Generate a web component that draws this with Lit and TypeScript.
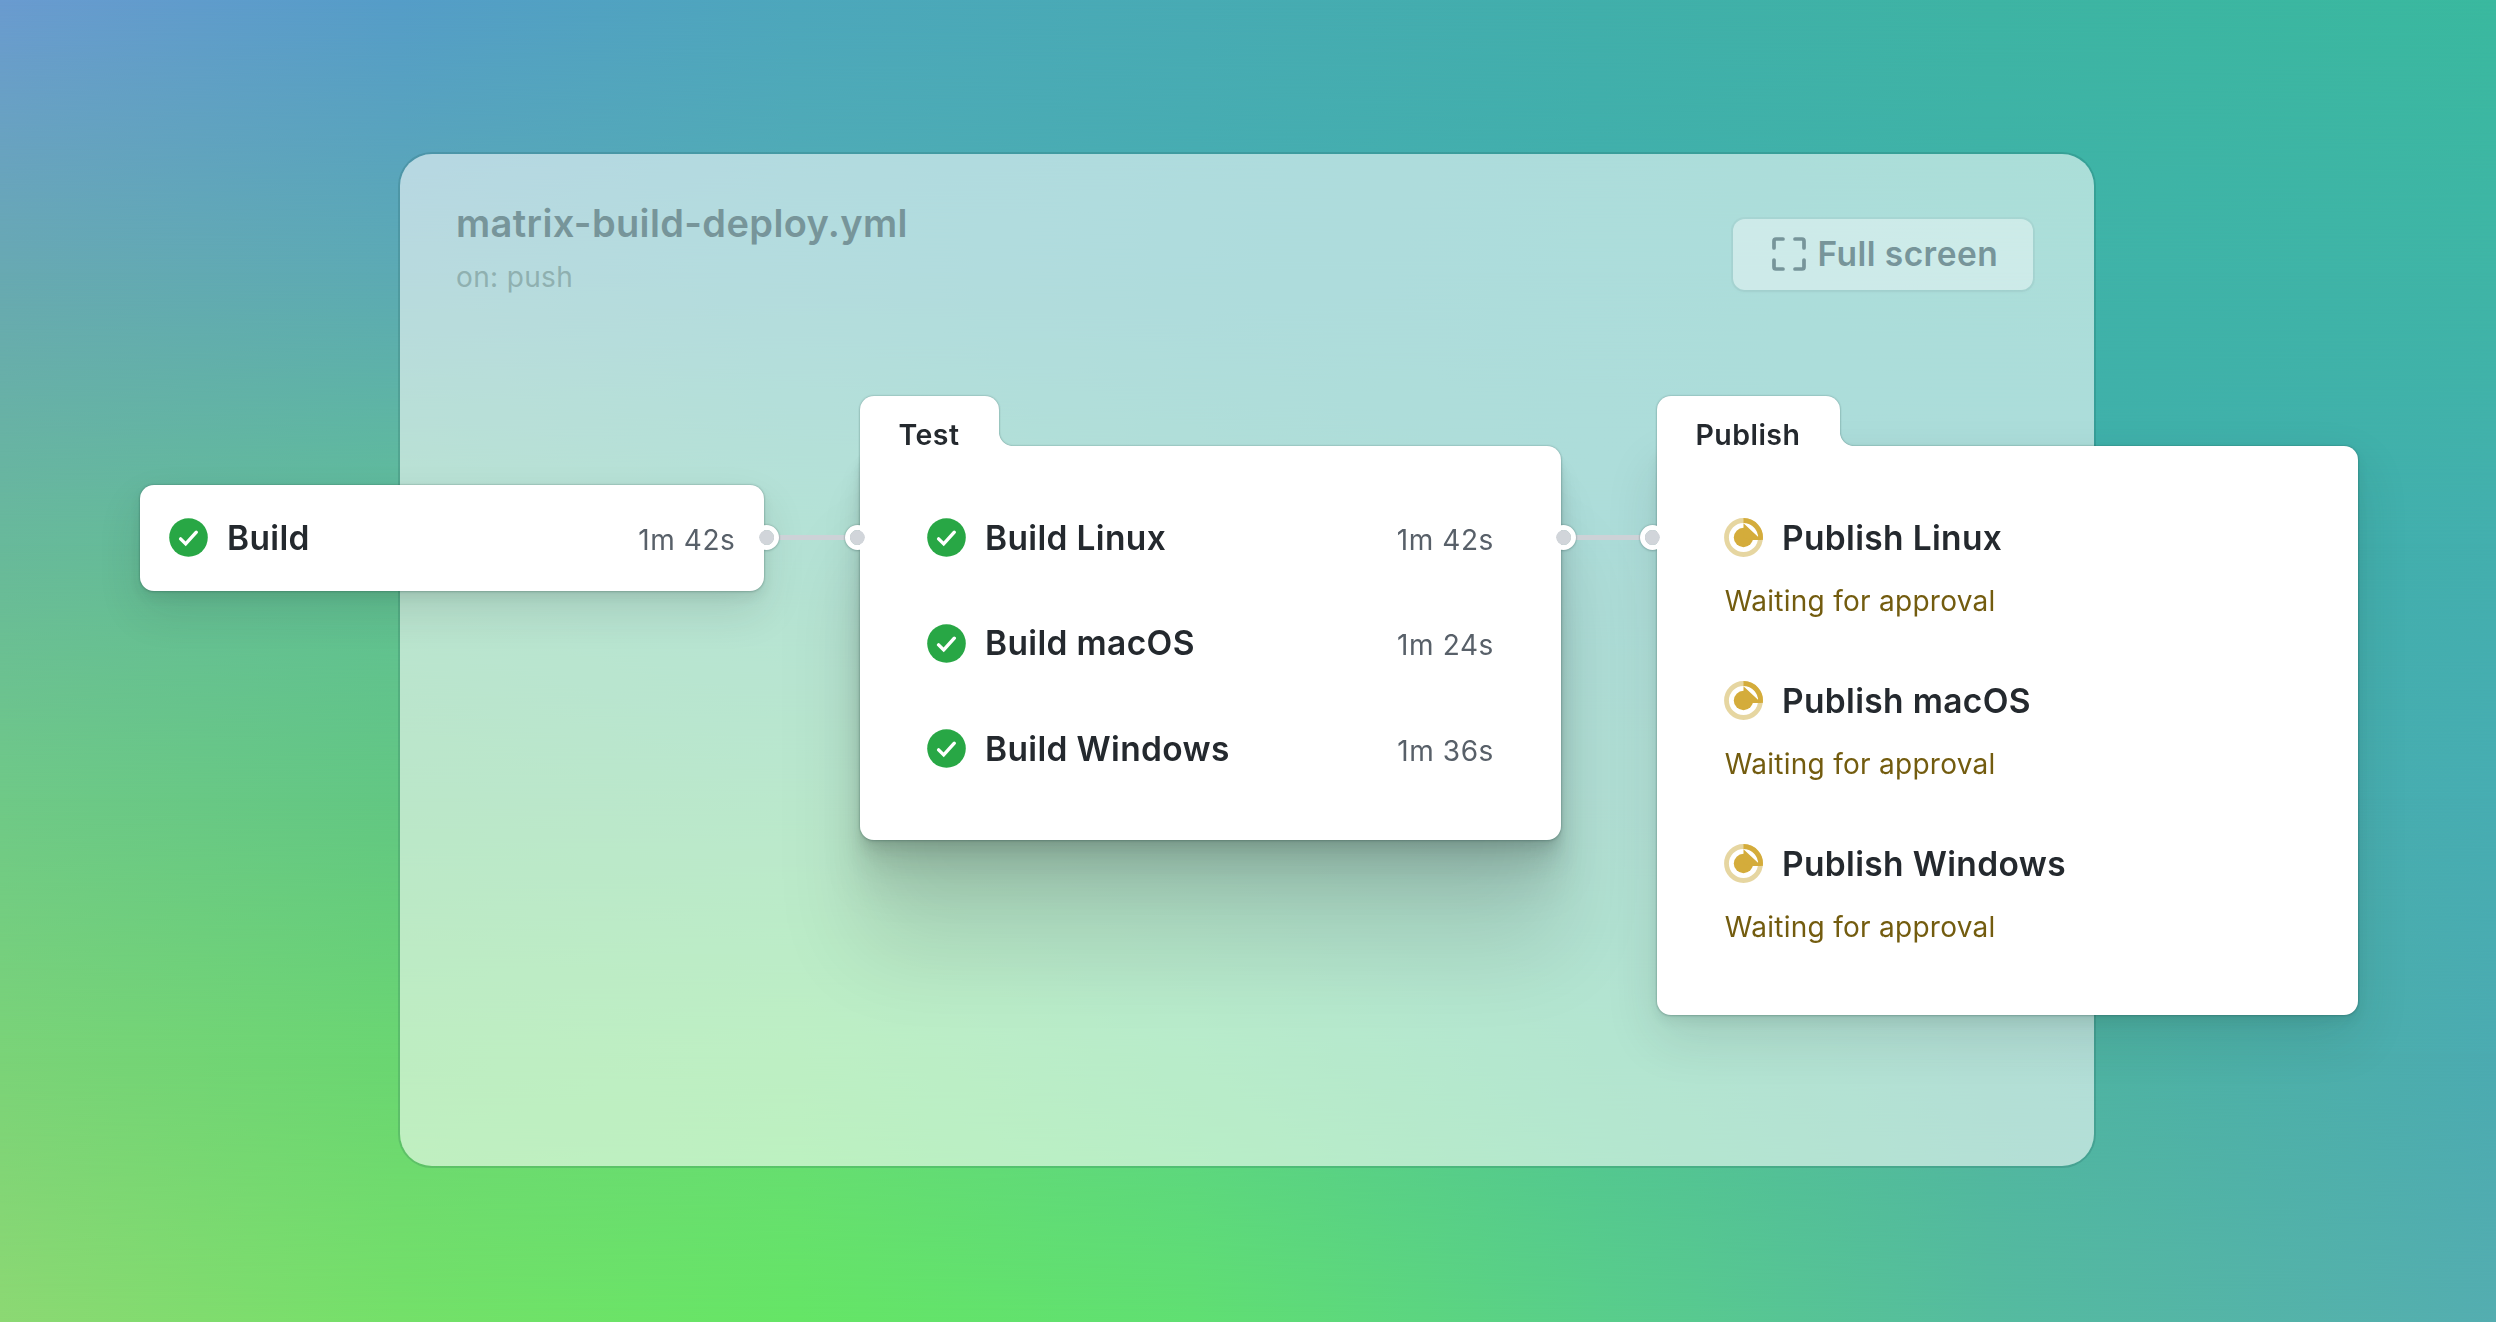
import { LitElement, html, css, svg } from "lit";
import { customElement, property } from "lit/decorators.js";
import { classMap } from "lit/directives/class-map.js";

type Status = "success" | "waiting";
interface Job {
  name: string;
  status: Status;
  time?: string;
  note?: string;
}

/* Colour mesh: stops at X percent, rows at Y percent. */
const MESH_X = [0, 15.94, 31.89, 47.83, 63.78, 79.72, 100];
const MESH: { y: number; colors: string[] }[] = [
  { y: 0, colors: ["#6a9bd0", "#559dc8", "#4da7bc", "#48abb4", "#41afab", "#3eb4a4", "#3ab99f"] },
  { y: 20.5, colors: ["#68a9b2", "#5caab4", "#51aeb3", "#46aeb0", "#41b0ac", "#3fb2a9", "#3fb5a6"] },
  { y: 41, colors: ["#68b99b", "#60bf96", "#54bd9f", "#4ab5a2", "#42b0a8", "#3fafaa", "#43afae"] },
  { y: 60.3, colors: ["#6fc987", "#62c783", "#60c98b", "#55c092", "#4db69d", "#48aea8", "#47adb2"] },
  { y: 79.6, colors: ["#7ad378", "#6ad672", "#67da76", "#5bd285", "#50c492", "#4fb59f", "#4babb1"] },
  { y: 100, colors: ["#8cd873", "#74e069", "#65e566", "#60df72", "#59ce8a", "#55bb9f", "#54adb0"] },
];

@customElement("mesh-backdrop")
class MeshBackdrop extends LitElement {
  static styles = css`
    :host { display: block; position: absolute; inset: 0; }
    .row { position: absolute; inset: 0; }
  `;
  render() {
    return MESH.map((row, i) => {
      const stops = row.colors.map((c, k) => `${c} ${MESH_X[k]}%`).join(",");
      const mask = i
        ? `linear-gradient(to bottom, transparent ${MESH[i - 1].y}%, #000 ${row.y}%)`
        : "none";
      return html`<div class="row"
        style="background:linear-gradient(to right,${stops});-webkit-mask-image:${mask};mask-image:${mask}"></div>`;
    });
  }
}

const checkIcon = svg`
  <circle cx="19.5" cy="19.5" r="19.3" fill="#28a745" />
  <path d="M11.6 20.9 L16.7 25.9 L27.3 14.2" fill="none" stroke="#fff" stroke-width="3.4"
    stroke-linecap="round" stroke-linejoin="miter" />`;

const waitingIcon = svg`
  <circle cx="19.5" cy="19.5" r="17" fill="none" stroke="#e6d6a1" stroke-width="4.8" />
  <path d="M19.5 2.5 A17 17 0 0 1 36.4 21.8" fill="none" stroke="#d4ac3b" stroke-width="4.8" />
  <circle cx="19.5" cy="19.5" r="9.7" fill="#d4ac3b" />
  <path d="M19.5 5.2 L34 18.8 L37 18.8 V22 H28 L19.5 19.5 Z" fill="#d4ac3b" />`;

@customElement("status-icon")
class StatusIcon extends LitElement {
  @property() status: Status = "success";
  static styles = css`
    :host { display: block; width: 39px; height: 39px; flex: none; }
    .icon { display: block; }
  `;
  render() {
    return html`<svg class="icon" width="39" height="39" viewBox="0 0 39 39">
      ${this.status === "success" ? checkIcon : waitingIcon}
    </svg>`;
  }
}

@customElement("job-row")
class JobRow extends LitElement {
  @property({ attribute: false }) job!: Job;
  static styles = css`
    :host { display: block; }
    .main { display: flex; align-items: center; height: 40px; }
    .text { display: flex; flex: 1; align-items: baseline; justify-content: space-between; margin-left: 19px; line-height: 40px; }
    .timed { margin: 2.5px 0 0 19.5px; }
    .name { font-size: 33.5px; font-weight: 560; color: #24292e; white-space: nowrap; letter-spacing: 0.35px; }
    .time { font-size: 28px; color: #586069; white-space: nowrap; letter-spacing: 0.6px; }
    .note { margin: 26px 0 0 0.7px; font-size: 28px; line-height: 34px; color: #735c0f; letter-spacing: 0.28px; }
  `;
  render() {
    const { name, status, time, note } = this.job;
    return html`
      <div class="main">
        <status-icon .status=${status}></status-icon>
        <div class=${classMap({ text: true, timed: !!time })}>
          <span class="name">${name}</span>
          ${time ? html`<span class="time">${time}</span>` : null}
        </div>
      </div>
      ${note ? html`<div class="note">${note}</div>` : null}
    `;
  }
}

@customElement("job-card")
class JobCard extends LitElement {
  @property() label = "";
  @property() kind = "";
  @property({ type: Boolean }) input = false;
  @property({ type: Boolean }) output = false;
  @property({ attribute: false }) jobs: Job[] = [];
  static styles = css`
    :host { display: block; position: relative; }
    .outline {
      position: relative;
      z-index: 2;
      filter: drop-shadow(0 0 1.2px rgba(27, 60, 55, 0.34)) drop-shadow(0 1px 1px rgba(27, 60, 55, 0.12));
    }
    .shade { position: absolute; inset: 0; border-radius: 14px; }
    .grouped .shade { top: 50px; }
    .build .shade { box-shadow: 0 6px 12px rgba(30, 45, 40, 0.08), 0 20px 44px rgba(30, 45, 40, 0.12); }
    .test .shade {
      box-shadow: 0 110px 90px rgba(0, 0, 0, 0.11), 0 48px 44px rgba(0, 0, 0, 0.08),
        0 24px 26px rgba(0, 0, 0, 0.07), 0 13px 14px rgba(0, 0, 0, 0.055),
        0 7px 8px rgba(0, 0, 0, 0.045), 0 3px 4px rgba(0, 0, 0, 0.03);
    }
    .publish .shade { box-shadow: 0 6px 12px rgba(30, 45, 40, 0.08), 0 22px 52px rgba(30, 45, 40, 0.13); }
    .tab {
      position: relative;
      width: max-content;
      height: 50px;
      padding: 0 40px 0 38.5px;
      border-radius: 14px 14px 0 0;
      background: #fff;
      font-size: 28.5px;
      font-weight: 580;
      letter-spacing: 0.45px;
      line-height: 77px;
      color: #24292e;
    }
    .tab::after {
      content: "";
      position: absolute;
      left: 100%;
      bottom: 0;
      width: 14px;
      height: 14px;
      background: radial-gradient(circle at 100% 0, transparent 13.6px, #fff 14.4px);
    }
    .body { display: flex; flex-direction: column; background: #fff; border-radius: 14px; }
    .grouped .body { border-top-left-radius: 0; }
    .build .body { height: 106px; padding: 33px 28.5px 0 28.5px; box-sizing: border-box; }
    .test .body { height: 394px; padding: 71.5px 67px 0 66.5px; gap: 65.6px; box-sizing: border-box; }
    .publish .body { height: 568.5px; padding: 71.5px 67px 0; gap: 63.2px; box-sizing: border-box; }
    .port {
      position: absolute;
      top: 129px;
      width: 15px;
      height: 15px;
      border: 5px solid #fff;
      border-radius: 50%;
      background: #d1d5da;
      background-clip: padding-box;
    }
    .build .port { top: 40.5px; }
    .in { left: -15px; }
    .publish .in { left: -17px; }
    .out { right: -15px; }
  `;
  render() {
    const cls = { [this.kind]: true, grouped: !!this.label };
    return html`
      <div class=${classMap(cls)}>
        <div class="shade"></div>
        <div class="outline">
          ${this.label ? html`<div class="tab">${this.label}</div>` : null}
          <div class="body">
            ${this.jobs.map((j) => html`<job-row .job=${j}></job-row>`)}
          </div>
          ${this.input ? html`<span class="port in"></span>` : null}
          ${this.output ? html`<span class="port out"></span>` : null}
        </div>
      </div>
    `;
  }
}

const BUILD: Job[] = [{ name: "Build", status: "success", time: "1m 42s" }];
const TEST: Job[] = [
  { name: "Build Linux", status: "success", time: "1m 42s" },
  { name: "Build macOS", status: "success", time: "1m 24s" },
  { name: "Build Windows", status: "success", time: "1m 36s" },
];
const PUBLISH: Job[] = ["Linux", "macOS", "Windows"].map((os) => ({
  name: `Publish ${os}`,
  status: "waiting" as Status,
  note: "Waiting for approval",
}));

@customElement("app-root")
class AppRoot extends LitElement {
  static styles = css`
    :host {
      display: grid;
      position: relative;
      width: 2496px;
      height: 1322px;
      overflow: hidden;
      font-family: Inter, "Liberation Sans", sans-serif;
    }
    .panel {
      grid-area: 1 / 1;
      position: relative;
      margin: 154px 402px 156px 400px;
      padding: 41px 61px 0 56px;
      display: flex;
      justify-content: space-between;
      align-items: flex-start;
      border-radius: 32px;
      background: rgba(255, 255, 255, 0.57);
      background-clip: padding-box;
      box-shadow: 0 0 0 2px rgba(20, 70, 70, 0.17);
    }
    .title { font-size: 38px; font-weight: 600; line-height: 56px; color: #77959a; white-space: nowrap; letter-spacing: 0.37px; }
    .trigger { font-size: 28px; line-height: 34px; margin-top: 9px; color: #8fb0b0; letter-spacing: 0.35px; }
    .button {
      display: flex;
      align-items: center;
      box-sizing: border-box;
      width: 300.5px;
      height: 71.5px;
      margin-top: 23.5px;
      padding: 0 0 0 38px;
      gap: 11px;
      border-radius: 12px;
      background: rgba(255, 255, 255, 0.4);
      box-shadow: 0 0 0 2px rgba(150, 185, 185, 0.22), 0 2px 3px rgba(100, 140, 140, 0.08);
      color: #77959a;
      font-size: 33.5px;
      font-weight: 570;
      letter-spacing: 0.45px;
      white-space: nowrap;
    }
    .expand { display: block; flex: none; }
    .graph {
      grid-area: 1 / 1;
      position: relative;
      display: flex;
      align-items: flex-start;
      padding: 396px 138px 0 140px;
    }
    .build { width: 624px; margin-top: 88.5px; }
    .test { width: 701px; }
    .publish { width: 701px; }
    .link {
      position: relative;
      z-index: 1;
      flex: none;
      width: 96px;
      height: 5px;
      margin-top: 139px;
      background: #cdd2d7;
    }
  `;
  render() {
    return html`
      <mesh-backdrop></mesh-backdrop>
      <section class="panel">
        <div>
          <div class="title">matrix-build-deploy.yml</div>
          <div class="trigger">on: push</div>
        </div>
        <div class="button">
          <svg class="expand" width="36" height="36" viewBox="0 0 36 36" fill="none" stroke="#77959a"
            stroke-width="3.7" stroke-linecap="round" stroke-linejoin="round">
            <path d="M3 12 V5 Q3 3 5 3 H12 M24 3 H31 Q33 3 33 5 V12 M33 24 V31 Q33 33 31 33 H24 M12 33 H5 Q3 33 3 31 V24" />
          </svg>
          <span>Full screen</span>
        </div>
      </section>
      <main class="graph">
        <job-card class="build" kind="build" output .jobs=${BUILD}></job-card>
        <div class="link"></div>
        <job-card class="test" kind="test" label="Test" input output .jobs=${TEST}></job-card>
        <div class="link"></div>
        <job-card class="publish" kind="publish" label="Publish" input .jobs=${PUBLISH}></job-card>
      </main>
    `;
  }
}
